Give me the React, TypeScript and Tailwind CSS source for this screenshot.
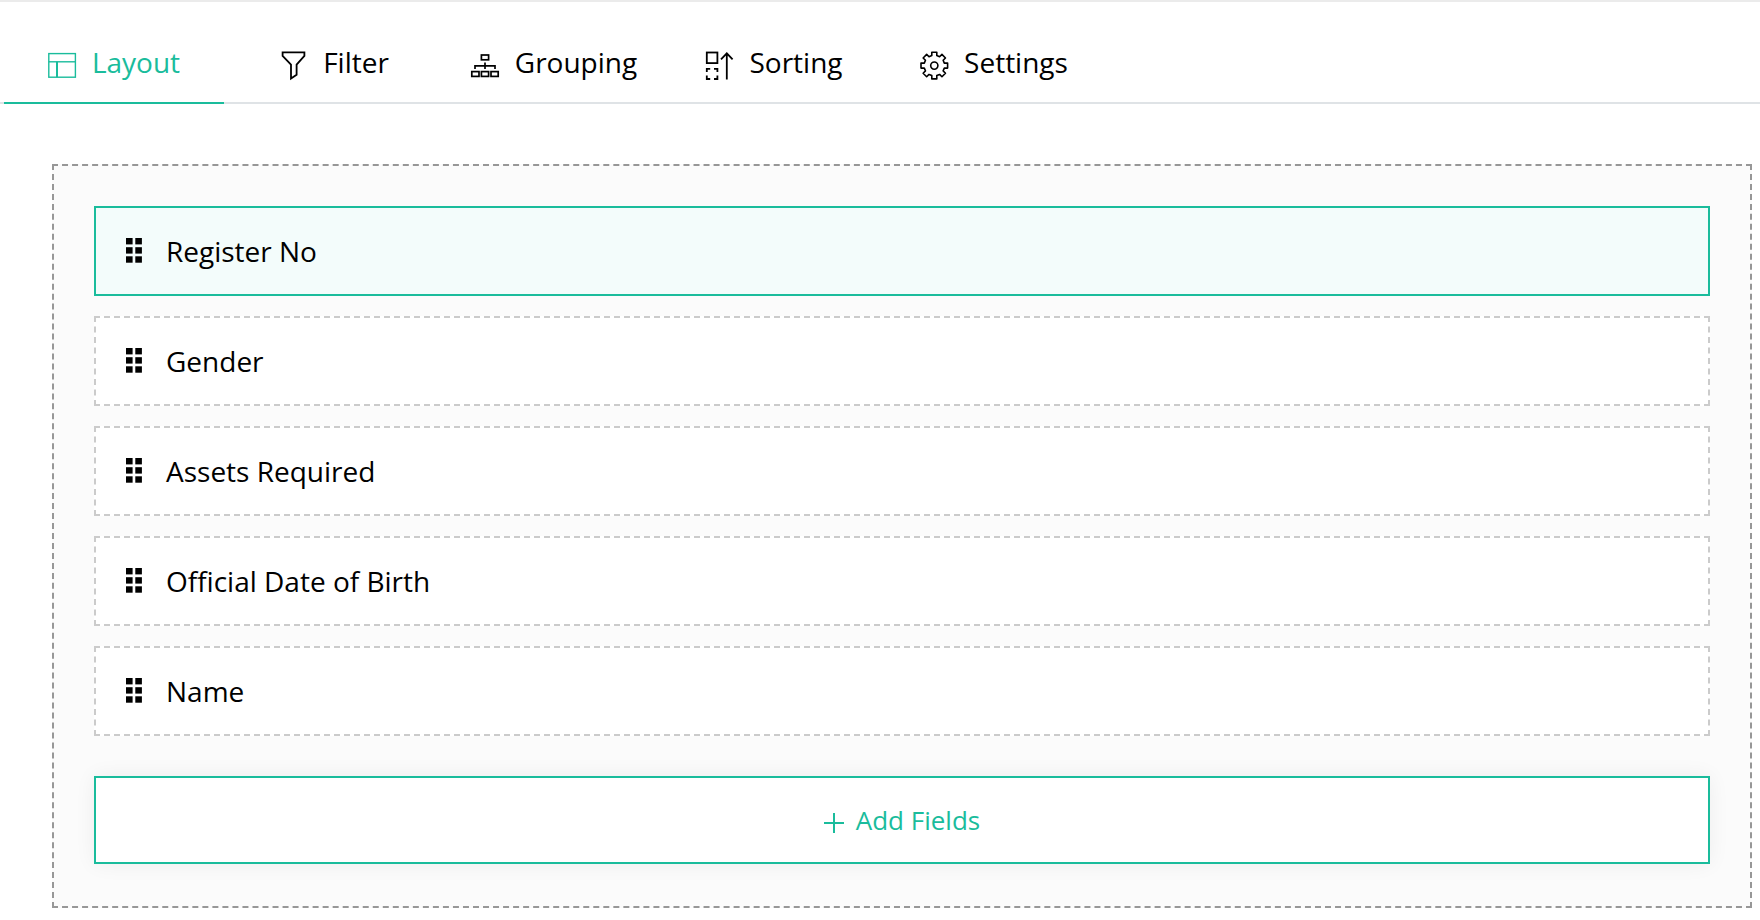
import { useState, type ReactNode } from "react";

const tabs: { name: string; icon: ReactNode }[] = [
  {
    name: "Layout",
    icon: (
      <>
        <rect x="0.8" y="1.6" width="26.6" height="23.6" />
        <path d="M0.8 9.8H27.4" />
        <path d="M9 9.8V25.2" strokeWidth="2" />
      </>
    ),
  },
  {
    name: "Filter",
    icon: <path d="M3.6 0.4H25.4V3.8L17.6 12.6V22.8L12 26.5V12.6L3.6 3.8Z" strokeWidth="1.8" />,
  },
  {
    name: "Grouping",
    icon: (
      <g strokeWidth="1.7">
        <rect x="10.4" y="3" width="7.2" height="4.8" />
        <path d="M14 10.6V17M4 17V13.8H24V17" />
        <rect x="0.8" y="19.6" width="7.2" height="4.8" />
        <rect x="10.4" y="19.6" width="7.2" height="4.8" />
        <rect x="20" y="19.6" width="7.2" height="4.8" />
      </g>
    ),
  },
  {
    name: "Sorting",
    icon: (
      <g strokeWidth="1.8">
        <rect x="1.8" y="0.5" width="10.6" height="10.6" />
        <path d="M1.8 20V16.8H5.2M9 16.8H12.4V20M12.4 23.6V27H9M5.2 27H1.8V23.6" />
        <path d="M21.8 27.6V1.4M16 7.4L21.8 1.4L27.6 7.4" />
      </g>
    ),
  },
  {
    name: "Settings",
    icon: (
      <g transform="translate(14.3 13.6)" strokeWidth="1.6" strokeLinejoin="round">
        <path d="M-2.5-10V-13.3H2.5V-10L5.3-8.84L7.64-11.17L11.17-7.64L8.84-5.3L10-2.5H13.3V2.5H10L8.84 5.3L11.17 7.64L7.64 11.17L5.3 8.84L2.5 10V13.3H-2.5V10L-5.3 8.84L-7.64 11.17L-11.17 7.64L-8.84 5.3L-10 2.5H-13.3V-2.5H-10L-8.84-5.3L-11.17-7.64L-7.64-11.17L-5.3-8.84Z" />
        <circle r="3.6" />
      </g>
    ),
  },
];

const fields = ["Register No", "Gender", "Assets Required", "Official Date of Birth", "Name"];

function DragHandle() {
  return (
    <svg viewBox="0 0 16 26" className="h-[26px] w-4" fill="currentColor" aria-hidden="true">
      {[0, 9.2, 18.3].map((y) => (
        <g key={y}>
          <rect x="0" y={y} width="6.6" height="6.4" />
          <rect x="9.3" y={y} width="6.6" height="6.4" />
        </g>
      ))}
    </svg>
  );
}

export default function App() {
  const [activeTab, setActiveTab] = useState("Layout");
  const [activeField, setActiveField] = useState("Register No");

  return (
    <div className="min-h-screen border-t-2 border-[#ebebeb] bg-white font-['Open_Sans',sans-serif] text-black">
      <nav className="flex border-b-2 border-[#dfe3e6] pl-1" role="tablist">
        {tabs.map(({ name, icon }) => (
          <button
            key={name}
            type="button"
            role="tab"
            aria-selected={activeTab === name}
            onClick={() => setActiveTab(name)}
            className={`-mb-0.5 flex w-[220px] items-center justify-center gap-4 border-b-2 pt-10 pb-5 text-[28px] leading-10 ${
              activeTab === name ? "border-[#1abc9c] text-[#1abc9c]" : "border-transparent"
            }`}
          >
            <svg
              viewBox="0 0 28 28"
              className="mt-2 size-7 shrink-0 overflow-visible"
              fill="none"
              stroke="currentColor"
              strokeWidth="1.4"
              aria-hidden="true"
            >
              {icon}
            </svg>
            {name}
          </button>
        ))}
      </nav>

      <main className="mt-[60px] mr-2 ml-[52px] border-2 border-dashed border-[#979797] bg-[#fbfbfb] px-10 pt-10 pb-[42px]">
        <ul className="flex flex-col gap-5">
          {fields.map((field) => (
            <li key={field}>
              <button
                type="button"
                onClick={() => setActiveField(field)}
                className={`flex h-[90px] w-full items-center gap-6 border-2 px-[30px] text-left text-[28px] leading-10 ${
                  activeField === field
                    ? "border-[#1abc9c] bg-[#f3fcfb]"
                    : "border-dashed border-[#cbcbcb] bg-white"
                }`}
              >
                <DragHandle />
                {field}
              </button>
            </li>
          ))}
        </ul>
        <button
          type="button"
          className="mt-10 flex h-[88px] w-full items-center justify-center gap-3 border-2 border-[#1abc9c] bg-white text-[26px] leading-10 text-[#1abc9c] shadow-[0_0_20px_rgba(0,0,0,0.06)]"
        >
          <svg viewBox="0 0 20 20" className="mt-1.5 size-5" stroke="currentColor" strokeWidth="2" aria-hidden="true">
            <path d="M10 0V20M0 10H20" />
          </svg>
          Add Fields
        </button>
      </main>
    </div>
  );
}
